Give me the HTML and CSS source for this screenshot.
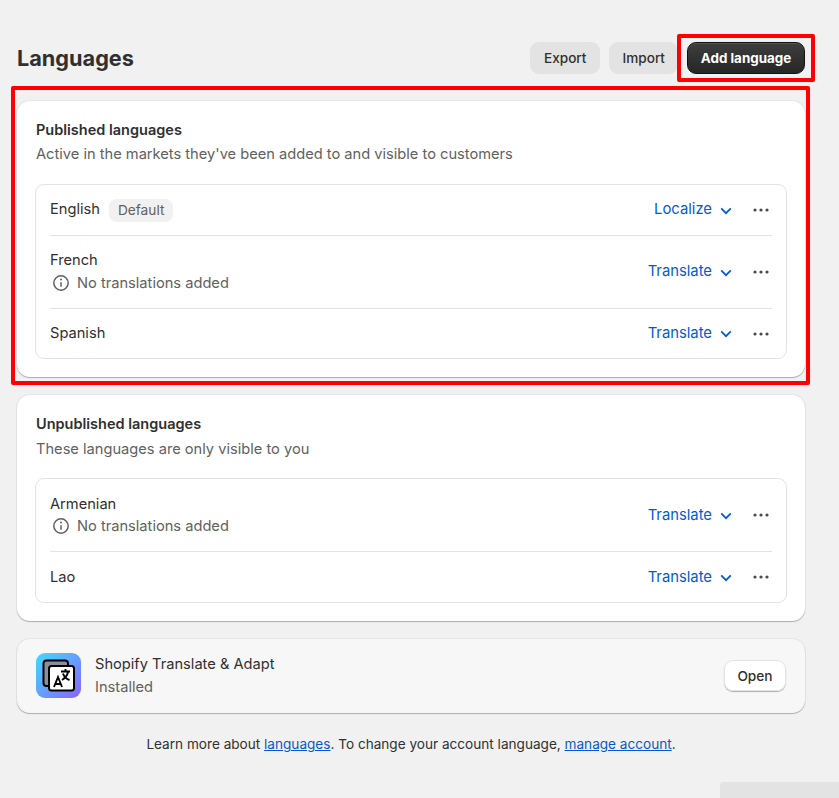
FILE: index.html
```html
<!DOCTYPE html>
<html lang="en">

<head>
  <meta charset="UTF-8">
  <meta name="viewport" content="width=device-width, initial-scale=1.0">
  <title>Languages</title>
  <link rel="stylesheet" href="styles.css">
</head>

<body>
  <div class="page">
    <div class="header">
      <h1 class="title">Languages</h1>
      <div class="actions">
        <button class="button gray export">Export</button>
        <button class="button gray">Import</button>
        <button class="button dark marked">Add language</button>
      </div>
    </div>

    <!-- Published -->
    <section class="card marked-card">
      <h2 class="card-title">Published languages</h2>
      <p class="card-text">Active in the markets they've been added to and visible to customers</p>
      <div class="list">
        <div class="row row-first">
          <div class="lang">
            <div class="lang-line"><span>English</span><span class="badge">Default</span></div>
          </div>
          <a class="action">Localize
            <svg class="chevron" viewBox="0 0 12 8"><path d="M1.2 1.4 6 6.2l4.8-4.8" /></svg>
          </a>
          <svg class="dots" viewBox="0 0 18 4"><circle cx="3" cy="2" r="1.6" /><circle cx="9" cy="2" r="1.6" /><circle cx="15" cy="2" r="1.6" /></svg>
        </div>
        <div class="row row-tall">
          <div class="lang">
            <div>French</div>
            <div class="note">
              <svg class="info" viewBox="0 0 18 18"><circle cx="9" cy="9" r="7.2" /><path d="M9 8.2v4.6" /><circle class="info-dot" cx="9" cy="5.5" r="1" /></svg>
              No translations added
            </div>
          </div>
          <a class="action">Translate
            <svg class="chevron" viewBox="0 0 12 8"><path d="M1.2 1.4 6 6.2l4.8-4.8" /></svg>
          </a>
          <svg class="dots" viewBox="0 0 18 4"><circle cx="3" cy="2" r="1.6" /><circle cx="9" cy="2" r="1.6" /><circle cx="15" cy="2" r="1.6" /></svg>
        </div>
        <div class="row row-last">
          <div class="lang">
            <div>Spanish</div>
          </div>
          <a class="action">Translate
            <svg class="chevron" viewBox="0 0 12 8"><path d="M1.2 1.4 6 6.2l4.8-4.8" /></svg>
          </a>
          <svg class="dots" viewBox="0 0 18 4"><circle cx="3" cy="2" r="1.6" /><circle cx="9" cy="2" r="1.6" /><circle cx="15" cy="2" r="1.6" /></svg>
        </div>
      </div>
    </section>

    <!-- Unpublished -->
    <section class="card card-second">
      <h2 class="card-title">Unpublished languages</h2>
      <p class="card-text">These languages are only visible to you</p>
      <div class="list">
        <div class="row row-tall">
          <div class="lang">
            <div>Armenian</div>
            <div class="note">
              <svg class="info" viewBox="0 0 18 18"><circle cx="9" cy="9" r="7.2" /><path d="M9 8.2v4.6" /><circle class="info-dot" cx="9" cy="5.5" r="1" /></svg>
              No translations added
            </div>
          </div>
          <a class="action">Translate
            <svg class="chevron" viewBox="0 0 12 8"><path d="M1.2 1.4 6 6.2l4.8-4.8" /></svg>
          </a>
          <svg class="dots" viewBox="0 0 18 4"><circle cx="3" cy="2" r="1.6" /><circle cx="9" cy="2" r="1.6" /><circle cx="15" cy="2" r="1.6" /></svg>
        </div>
        <div class="row row-last">
          <div class="lang">
            <div>Lao</div>
          </div>
          <a class="action">Translate
            <svg class="chevron" viewBox="0 0 12 8"><path d="M1.2 1.4 6 6.2l4.8-4.8" /></svg>
          </a>
          <svg class="dots" viewBox="0 0 18 4"><circle cx="3" cy="2" r="1.6" /><circle cx="9" cy="2" r="1.6" /><circle cx="15" cy="2" r="1.6" /></svg>
        </div>
      </div>
    </section>

    <!-- App -->
    <section class="app-card">
      <svg class="app-icon" viewBox="0 0 45 45">
        <defs>
          <linearGradient id="appGradient" x1="0" y1="0" x2="1" y2="1">
            <stop offset="0" stop-color="#3fdcfd" />
            <stop offset="1" stop-color="#8a63ff" />
          </linearGradient>
        </defs>
        <rect width="45" height="45" rx="9" fill="url(#appGradient)" />
        <rect x="7.5" y="7.500" width="24.500" height="25.500" rx="3" fill="#8b8f9c" stroke="#000" stroke-width="2" />
        <rect x="13" y="13" width="25" height="24.500" rx="2.500" fill="#fff" stroke="#000" stroke-width="2" />
        <path d="M18 34l4-10 4 10M19.500 31h5M25 18.500h9M29.500 16v3M32 19c-.8 4-3.500 6.500-6 8M27 20.500c1 3 3.500 5.500 6.500 6.500" fill="none" stroke="#000" stroke-width="1.900" />
      </svg>
      <div class="app-info">
        <div>Shopify Translate &amp; Adapt</div>
        <div class="app-status">Installed</div>
      </div>
      <button class="button white">Open</button>
    </section>

    <p class="footer">Learn more about <a href="#">languages</a>. To change your account language, <a href="#">manage account</a>.</p>
  </div>
  <div class="corner"></div>
</body>

</html>
```
FILE: styles.css
```css
body {
  background-color: #f1f1f1;
  color: #303030;
  font-family: Inter, "Noto Sans", sans-serif;
  font-size: 14.65px;
  margin: 0;
  padding: 0;
  height: 798px;
  overflow: hidden;
  position: relative;
}

.page {
  width: 788px;
  margin-left: 17px;
  padding-top: 42px;
}

.header {
  display: flex;
  align-items: center;
  justify-content: space-between;
  height: 32px;
  margin-bottom: 27px;
}

.title {
  margin: 0;
  font-size: 21.7px;
  font-weight: 700;
  color: #303030;
}

.actions {
  display: flex;
  gap: 9px;
}

.button {
  height: 32px;
  border: none;
  border-radius: 9px;
  font-family: inherit;
  font-size: 13.6px;
  font-weight: 500;
  color: #303030;
  padding: 0 13px;
}

.button.gray {
  background-color: #e3e3e3;
  font-weight: 550;
}

.button.export {
  padding: 0 14px 0 13.5px;
}

.button.dark {
  background: linear-gradient(#3e3e3e, #262626);
  color: white;
  font-size: 13.4px;
  font-weight: 650;
  width: 118px;
  padding: 0;
  border: 1px solid #111;
  box-shadow: inset 0 1px 0 #555;
}

/* red annotation frames */
.marked {
  position: relative;
}

.marked::after {
  content: "";
  position: absolute;
  left: -11px;
  right: -11px;
  top: -9px;
  bottom: -9px;
  border: 4px solid #fe0000;
  border-radius: 2px;
}

.marked-card::after {
  content: "";
  position: absolute;
  left: -6px;
  right: -5px;
  top: -15px;
  bottom: -8px;
  border: 4px solid #fe0000;
  border-radius: 2px;
}

.card {
  position: relative;
  background-color: white;
  border-radius: 13px;
  padding: 19px 18px 18px;
  margin-bottom: 18px;
  box-shadow: 0 1px 1px rgba(0, 0, 0, 0.25), 0 0 0 1px #e6e6e6;
}

.card-title {
  margin: 0;
  padding-left: 1px;
  font-size: 14.5px;
  font-weight: 600;
  line-height: 20px;
}

.card-text {
  margin: 4px 0 20px;
  padding-left: 1px;
  line-height: 20px;
  color: #616161;
}

.card-second .card-text {
  margin: 5px 0 19px;
}

.list {
  border: 1px solid #e3e3e3;
  border-radius: 9px;
  padding: 0 14px;
}

.row {
  display: flex;
  align-items: center;
  border-top: 1px solid #e3e3e3;
}

.row-first {
  height: 50px;
  border-top: none;
}

.row-tall {
  height: 72px;
}

.list .row-tall:first-child {
  border-top: none;
}

.row-last {
  height: 49px;
}

.card-second .row-last {
  height: 50px;
}

.lang {
  flex: 1;
  line-height: 20px;
  margin-bottom: 2px;
}

.card-second .lang {
  margin-bottom: 1px;
}

.card-second .note {
  margin-top: 2px;
}

.lang-line {
  display: flex;
  align-items: center;
  gap: 9px;
}

.badge {
  background-color: #f1f1f1;
  color: #616161;
  font-size: 13.7px;
  padding: 2px 9px;
  border-radius: 8px;
  line-height: 19px;
  margin-top: 2px;
}

.note {
  display: flex;
  align-items: center;
  gap: 7px;
  color: #616161;
  margin-top: 3px;
  padding-left: 2px;
}

.info {
  width: 18px;
  height: 18px;
  fill: none;
  stroke: #616161;
  stroke-width: 1.500;
}

.info-dot {
  fill: #616161;
  stroke: none;
}

.action {
  display: flex;
  align-items: center;
  gap: 8px;
  color: #005bd3;
  font-size: 14.8px;
  margin-right: 20px;
  margin-bottom: 2px;
}

.card-second .action {
  margin-bottom: 1px;
}

.chevron {
  width: 12px;
  height: 8px;
  fill: none;
  stroke: #005bd3;
  stroke-width: 1.700;
  margin-top: 3px;
}

.dots {
  width: 18px;
  height: 4px;
  fill: #4a4a4a;
  margin-right: 2px;
}

.app-card {
  display: flex;
  align-items: center;
  gap: 14px;
  height: 74px;
  box-sizing: border-box;
  padding: 0 19px 1px;
  background-color: #f7f7f7;
  border-radius: 13px;
  box-shadow: 0 1px 1px rgba(0, 0, 0, 0.25), 0 0 0 1px #e6e6e6;
  margin-top: 18px;
}

.app-icon {
  width: 45px;
  height: 45px;
  flex: none;
}

.app-info {
  flex: 1;
  line-height: 20px;
}

.app-status {
  color: #616161;
  margin-top: 3px;
}

.button.white {
  background-color: white;
  width: 62px;
  height: 31px;
  padding: 0;
  font-size: 13.7px;
  box-shadow: inset 0 0 0 1px #e3e3e3, 0 1px 1px rgba(0, 0, 0, 0.3);
}

.footer {
  margin: 21px 0 0;
  text-align: center;
  font-size: 13.6px;
  line-height: 20px;
}

.footer a {
  color: #005bd3;
}

.corner {
  position: absolute;
  right: 0;
  bottom: 0;
  width: 119px;
  height: 16px;
  background-color: #e3e3e3;
  border-top-left-radius: 3px;
}
```
